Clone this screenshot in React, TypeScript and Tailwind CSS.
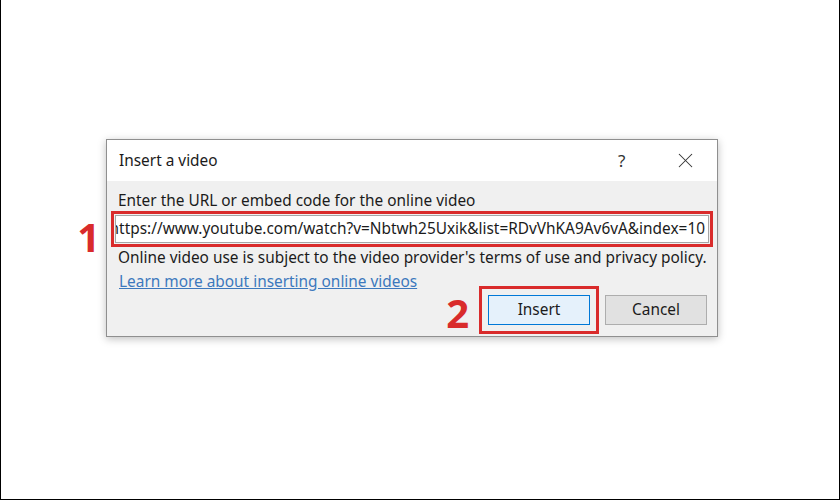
import { X } from 'lucide-react'

const URL_TEXT = 'https://www.youtube.com/watch?v=Nbtwh25Uxik&list=RDvVhKA9Av6vA&index=10'

// red step number drawn next to a highlighted control
function Step({ n, className }: { n: string; className: string }) {
  return (
    <span
      className={`absolute text-[40px] font-bold leading-none text-[#d92b2b] ${className}`}
      style={{ fontFamily: '"Open Sans", "Liberation Sans", sans-serif' }}
    >
      {n}
    </span>
  )
}

export default function App() {
  return (
    <div
      className="w-[840px] h-[500px] bg-white border-l border-r border-b border-black pl-[105px] pt-[139px] text-[#1b1b1b]"
      style={{ fontFamily: '"Noto Sans", "Open Sans", sans-serif' }}
    >
      <div className="w-[612px] h-[198px] flex flex-col border border-[#8f8f8f] shadow-[0_2px_8px_rgba(0,0,0,0.25)]">
        {/* title bar */}
        <div className="h-[41px] shrink-0 bg-white flex items-center pl-[12px]">
          <span className="text-[15.4px]">Insert a video</span>
          <span className="ml-auto w-[12px] text-[17px] text-[#333]">?</span>
          <span className="ml-[43px] mr-[19px] flex items-center text-[#333]">
            <X size={25} strokeWidth={1} />
          </span>
        </div>

        {/* body */}
        <div className="flex-1 bg-[#f0f0f0] px-[4px] pt-[10px] flex flex-col text-[15.4px]">
          <div className="pl-[7px] h-[20px] leading-[20px]">
            Enter the URL or embed code for the online video
          </div>

          <div className="relative border-[3px] border-[#d92b2b] p-[1px]">
            <Step n="1" className="right-full mr-[14px] top-[3px]" />
            <div className="h-[28px] bg-white border border-[#a5a5a5] flex justify-end items-center overflow-hidden pr-[3px]">
              <span className="whitespace-nowrap">{URL_TEXT}</span>
            </div>
          </div>

          <div className="pl-[7px] mt-[1px] h-[20px] leading-[20px]">
            Online video use is subject to the video provider's terms of use and privacy policy.
          </div>
          <div className="pl-[8px] mt-[4px] h-[20px] leading-[20px]">
            <span className="text-[#3c78bd] underline">Learn more about inserting online videos</span>
          </div>

          <div className="flex justify-end items-center -mt-[6px] pr-[6px]">
            <div className="relative border-[3px] border-[#d92b2b] p-[6px]">
              <Step n="2" className="right-full mr-[13px] top-[4px]" />
              <button className="w-[102px] h-[30px] bg-[#e5f1fb] border border-[#0078d7]">
                Insert
              </button>
            </div>
            <button className="ml-[6px] w-[102px] h-[30px] bg-[#e1e1e1] border border-[#adadad]">
              Cancel
            </button>
          </div>
        </div>
      </div>
    </div>
  )
}
